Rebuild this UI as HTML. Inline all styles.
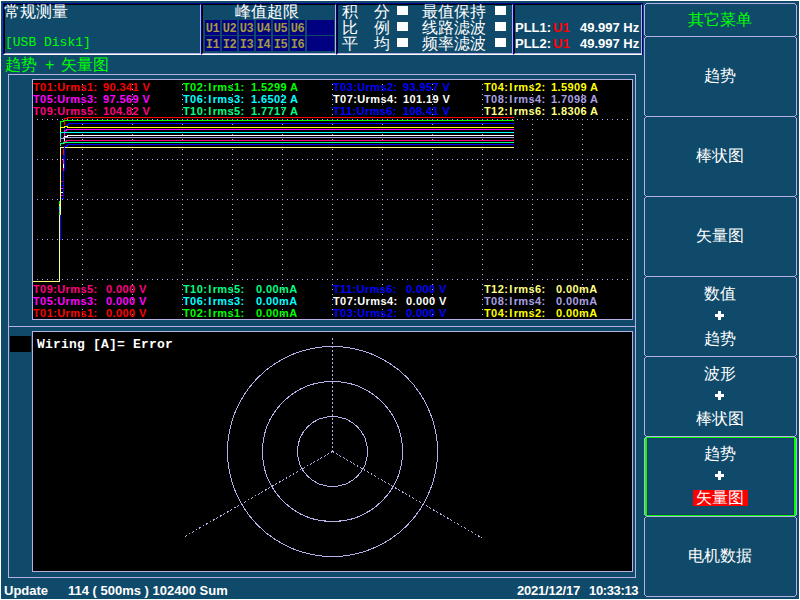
<!DOCTYPE html>
<html><head><meta charset="utf-8">
<style>
*{margin:0;padding:0;box-sizing:border-box}
html,body{width:800px;height:600px;overflow:hidden;background:#104a6a}
body{position:relative;font-family:"Liberation Sans",sans-serif;color:#fff}
.a{position:absolute}
.sunk{position:absolute;border-top:1px solid #000090;border-left:1px solid #000090;border-bottom:1px solid #fff;border-right:1px solid #fff}
.sunk>.in{position:absolute;left:0;top:0;right:0;bottom:0;border-top:1px solid #000;border-left:1px solid #000;border-bottom:1px solid #b8b0e0;border-right:1px solid #b8b0e0}
.cj{font-size:16px;line-height:16px;white-space:nowrap}
.cell{position:absolute;width:15px;height:15px;background:#000080;color:#a09a40;font:bold 12px/13px "Liberation Mono",monospace;text-align:center;letter-spacing:-0.5px;padding-top:3px;overflow:hidden}
.sq{position:absolute;width:11px;height:9px;background:#fff}
.t{position:absolute;font:bold 11px/12px "Liberation Sans",sans-serif;white-space:pre;letter-spacing:0.4px}
.btn{position:absolute;left:644px;width:153px;border:1px solid #b8b0e0;border-radius:2px}
.mt{position:absolute;left:644px;width:151px;text-align:center;font-size:16px;line-height:16px;white-space:nowrap}
</style></head><body>
<!-- screen border -->
<div class="a" style="left:0;top:0;width:800px;height:600px;border:1px solid #fff"></div>

<!-- status panels -->
<div class="sunk" style="left:3px;top:3px;width:199px;height:52px"><div class="in"></div></div>
<div class="sunk" style="left:201px;top:3px;width:136px;height:52px"><div class="in"></div></div>
<div class="sunk" style="left:336px;top:3px;width:178px;height:52px"><div class="in"></div></div>
<div class="sunk" style="left:513px;top:3px;width:130px;height:52px"><div class="in"></div></div>
<div class="a" style="left:642px;top:3px;width:1px;height:52px;background:#000090"></div>

<div class="a cj" style="left:4px;top:4px">常规测量</div>
<div class="a" style="left:5px;top:36px;color:#00ff00;font:13px/14px 'Liberation Mono',monospace">[USB Disk1]</div>

<div class="a cj" style="left:235px;top:4px">峰值超限</div>
<div class="cell" style="left:205px;top:20px">U1</div>
<div class="cell" style="left:222px;top:20px">U2</div>
<div class="cell" style="left:239px;top:20px">U3</div>
<div class="cell" style="left:256px;top:20px">U4</div>
<div class="cell" style="left:273px;top:20px">U5</div>
<div class="cell" style="left:290px;top:20px">U6</div>
<div class="cell" style="left:307px;top:20px;width:27px"></div>
<div class="cell" style="left:205px;top:36px">I1</div>
<div class="cell" style="left:222px;top:36px">I2</div>
<div class="cell" style="left:239px;top:36px">I3</div>
<div class="cell" style="left:256px;top:36px">I4</div>
<div class="cell" style="left:273px;top:36px">I5</div>
<div class="cell" style="left:290px;top:36px">I6</div>
<div class="cell" style="left:307px;top:36px;width:27px"></div>

<div class="a cj" style="left:342px;top:4px">积</div><div class="a cj" style="left:374px;top:4px">分</div>
<div class="a cj" style="left:342px;top:20px">比</div><div class="a cj" style="left:374px;top:20px">例</div>
<div class="a cj" style="left:342px;top:36px">平</div><div class="a cj" style="left:374px;top:36px">均</div>
<div class="sq" style="left:397px;top:6px"></div><div class="sq" style="left:397px;top:22px"></div><div class="sq" style="left:397px;top:38px"></div>
<div class="a cj" style="left:422px;top:4px">最值保持</div>
<div class="a cj" style="left:422px;top:20px">线路滤波</div>
<div class="a cj" style="left:422px;top:36px">频率滤波</div>
<div class="sq" style="left:495px;top:6px"></div><div class="sq" style="left:495px;top:22px"></div><div class="sq" style="left:495px;top:38px"></div>

<div class="a" style="left:515px;top:21px;font:bold 13px/14px 'Liberation Sans',sans-serif">PLL1:</div><div class="a" style="left:553px;top:21px;font:bold 13px/14px 'Liberation Sans',sans-serif;color:#ff0000">U1</div>
<div class="a" style="left:580px;top:21px;font:bold 13px/14px 'Liberation Sans',sans-serif">49.997 Hz</div>
<div class="a" style="left:515px;top:37px;font:bold 13px/14px 'Liberation Sans',sans-serif">PLL2:</div><div class="a" style="left:553px;top:37px;font:bold 13px/14px 'Liberation Sans',sans-serif;color:#ff0000">U1</div>
<div class="a" style="left:580px;top:37px;font:bold 13px/14px 'Liberation Sans',sans-serif">49.997 Hz</div>

<!-- mode label -->
<div class="a cj" style="left:5px;top:57px;color:#00ff00">趋势</div><div class="a cj" style="left:45px;top:57px;color:#00ff00">+</div><div class="a cj" style="left:61px;top:57px;color:#00ff00">矢量图</div>

<!-- frames -->
<div class="a" style="left:8px;top:74px;width:628px;height:504px;border:1px solid #b8b0e0"></div>
<div class="a" style="left:8px;top:326px;width:628px;height:1px;background:#b8b0e0"></div>
<div class="a" style="left:32px;top:79px;width:601px;height:241px;border:1px solid #b8b0e0;background:#000"></div>
<div class="a" style="left:32px;top:331px;width:601px;height:241px;border:1px solid #b8b0e0;background:#000"></div>
<div class="a" style="left:10px;top:336px;width:21px;height:16px;background:#000"></div>

<!-- trend chart -->
<svg class="a" style="left:0;top:0" width="800" height="600" shape-rendering="crispEdges">
  <g stroke="#b0b0e8" stroke-width="1" stroke-dasharray="1 4" fill="none">
    <path d="M37 119.5H632M37 159.5H632M37 199.5H632M37 239.5H632M37 279.5H632"/>
    <path d="M82.5 84V320M132.5 84V320M182.5 84V320M232.5 84V320M282.5 84V320M332.5 84V320M382.5 84V320M432.5 84V320M482.5 84V320M532.5 84V320M582.5 84V320"/>
  </g>
  <g fill="none" stroke-width="1">
    <path stroke="#ffff80" d="M33 281.5H59.5V215M60.5 215V147.5H514"/>
    <path stroke="#0000ff" d="M64.5 171V146.5H66.5V145.5H67.5V144.5H514"/>
    <path stroke="#0000ff" d="M63.5 171V198.5H61"/>
    <path stroke="#0000ff" d="M60.5 215V240"/>
    <path stroke="#ff0000" d="M64.5 125V118.5H67.5V117.5H514"/>
    <path stroke="#00ff00" d="M60.5 127V121.5H63.5V120.5H514"/>
    <path stroke="#0000ff" d="M64.5 130V126.5H66.5V125.5H67.5V124.5H68.5V123.5H514"/>
    <path stroke="#ffff00" d="M60.5 132V127.5H64.5V126.5H67.5V127.5H514"/>
    <path stroke="#ff00ff" d="M64.5 136V130.5H66.5V129.5H514"/>
    <path stroke="#00ffff" d="M60.5 138V132.5H514"/>
    <path stroke="#ffffff" d="M64.5 141V136.5H67.5V135.5H514"/>
    <path stroke="#a8a0e0" d="M60.5 142V138.5H63.5V137.5H514"/>
    <path stroke="#ff0080" d="M64.5 144V141.5H66.5V140.5H514"/>
    <path stroke="#00ff80" d="M60.5 146V143.5H63.5V142.5H514"/>
    <path stroke="#ff0000" d="M63.5 149V155M61 181.5H63"/>
    <path stroke="#0000ff" d="M63.5 155V159M61 185.5H63"/>
    <path stroke="#ff00ff" d="M63.5 159V164M61 188.5H63"/>
    <path stroke="#ffffff" d="M63.5 164V168M61 192.5H63"/>
    <path stroke="#ff0080" d="M63.5 168V171M61 195.5H63"/>
    <path stroke="#00ff00" d="M59.5 201V204M59.5 213V215"/>
    <path stroke="#ffff00" d="M59.5 204V206"/>
    <path stroke="#00ffff" d="M59.5 206V210"/>
    <path stroke="#a8a0e0" d="M59.5 210V213"/>
  </g>
</svg>

<!-- trend texts top -->
<div class="t" style="left:33px;top:81px;color:#ff0000">T01:Urms1:</div><div class="t" style="left:103px;top:81px;color:#ff0000">90.341 V</div>
<div class="t" style="left:33px;top:93px;color:#ff00ff">T05:Urms3:</div><div class="t" style="left:103px;top:93px;color:#ff00ff">97.569 V</div>
<div class="t" style="left:33px;top:105px;color:#ff0080">T09:Urms5:</div><div class="t" style="left:103px;top:105px;color:#ff0080">104.82 V</div>
<div class="t" style="left:183px;top:81px;color:#00ff00">T02:<span style="padding:0 1px">I</span>rms1:</div><div class="t" style="left:251px;top:81px;color:#00ff00">1.5299 A</div>
<div class="t" style="left:183px;top:93px;color:#00ffff">T06:<span style="padding:0 1px">I</span>rms3:</div><div class="t" style="left:251px;top:93px;color:#00ffff">1.6502 A</div>
<div class="t" style="left:183px;top:105px;color:#00ff80">T10:<span style="padding:0 1px">I</span>rms5:</div><div class="t" style="left:251px;top:105px;color:#00ff80">1.7717 A</div>
<div class="t" style="left:333px;top:81px;color:#0000ff">T03:Urms2:</div><div class="t" style="left:403px;top:81px;color:#0000ff">93.957 V</div>
<div class="t" style="left:333px;top:93px;color:#ffffff">T07:Urms4:</div><div class="t" style="left:403px;top:93px;color:#ffffff">101.19 V</div>
<div class="t" style="left:333px;top:105px;color:#0000ff">T11:Urms6:</div><div class="t" style="left:403px;top:105px;color:#0000ff">108.41 V</div>
<div class="t" style="left:484px;top:81px;color:#ffff00">T04:<span style="padding:0 1px">I</span>rms2:</div><div class="t" style="left:551px;top:81px;color:#ffff00">1.5909 A</div>
<div class="t" style="left:484px;top:93px;color:#a8a0e0">T08:<span style="padding:0 1px">I</span>rms4:</div><div class="t" style="left:551px;top:93px;color:#a8a0e0">1.7098 A</div>
<div class="t" style="left:484px;top:105px;color:#ffff80">T12:<span style="padding:0 1px">I</span>rms6:</div><div class="t" style="left:551px;top:105px;color:#ffff80">1.8306 A</div>

<!-- trend texts bottom -->
<div class="t" style="left:33px;top:283px;color:#ff0080">T09:Urms5:</div><div class="t" style="left:106px;top:283px;color:#ff0080">0.000 V</div>
<div class="t" style="left:33px;top:295px;color:#ff00ff">T05:Urms3:</div><div class="t" style="left:106px;top:295px;color:#ff00ff">0.000 V</div>
<div class="t" style="left:33px;top:307px;color:#ff0000">T01:Urms1:</div><div class="t" style="left:106px;top:307px;color:#ff0000">0.000 V</div>
<div class="t" style="left:183px;top:283px;color:#00ff80">T10:<span style="padding:0 1px">I</span>rms5:</div><div class="t" style="left:256px;top:283px;color:#00ff80">0.00mA</div>
<div class="t" style="left:183px;top:295px;color:#00ffff">T06:<span style="padding:0 1px">I</span>rms3:</div><div class="t" style="left:256px;top:295px;color:#00ffff">0.00mA</div>
<div class="t" style="left:183px;top:307px;color:#00ff00">T02:<span style="padding:0 1px">I</span>rms1:</div><div class="t" style="left:256px;top:307px;color:#00ff00">0.00mA</div>
<div class="t" style="left:333px;top:283px;color:#0000ff">T11:Urms6:</div><div class="t" style="left:406px;top:283px;color:#0000ff">0.000 V</div>
<div class="t" style="left:333px;top:295px;color:#ffffff">T07:Urms4:</div><div class="t" style="left:406px;top:295px;color:#ffffff">0.000 V</div>
<div class="t" style="left:333px;top:307px;color:#0000ff">T03:Urms2:</div><div class="t" style="left:406px;top:307px;color:#0000ff">0.000 V</div>
<div class="t" style="left:484px;top:283px;color:#ffff80">T12:<span style="padding:0 1px">I</span>rms6:</div><div class="t" style="left:556px;top:283px;color:#ffff80">0.00mA</div>
<div class="t" style="left:484px;top:295px;color:#a8a0e0">T08:<span style="padding:0 1px">I</span>rms4:</div><div class="t" style="left:556px;top:295px;color:#a8a0e0">0.00mA</div>
<div class="t" style="left:484px;top:307px;color:#ffff00">T04:<span style="padding:0 1px">I</span>rms2:</div><div class="t" style="left:556px;top:307px;color:#ffff00">0.00mA</div>

<!-- vector chart -->
<div class="a" style="left:37px;top:338px;font:bold 13px/14px 'Liberation Mono',monospace;color:#fff;letter-spacing:0.2px">Wiring [A]= Error</div>
<svg class="a" style="left:0;top:0" width="800" height="600" shape-rendering="crispEdges">
  <g fill="none" stroke="#b8b0e8" stroke-width="1">
    <circle cx="332.5" cy="451.5" r="105"/>
    <circle cx="332.5" cy="451.5" r="70"/>
    <circle cx="332.5" cy="451.5" r="35"/>
  </g>
  <g fill="none" stroke="#b8b0e8" stroke-width="1" stroke-dasharray="2 2">
    <path d="M332.5 338V451.5"/>
    <path d="M332.5 451.5L184 537"/>
    <path d="M332.5 451.5L482 538"/>
  </g>
</svg>

<!-- status bottom -->
<div class="a" style="left:4px;top:584px;font:bold 13px/14px 'Liberation Sans',sans-serif">Update</div>
<div class="a" style="left:68px;top:584px;font:bold 13px/14px 'Liberation Sans',sans-serif">114 ( 500ms ) 102400 Sum</div>
<div class="a" style="left:517px;top:584px;font:bold 13px/14px 'Liberation Sans',sans-serif;letter-spacing:-0.2px">2021/12/17</div><div class="a" style="left:589px;top:584px;font:bold 13px/14px 'Liberation Sans',sans-serif;letter-spacing:-0.35px">10:33:13</div>

<!-- menu -->
<div class="a" style="left:645px;top:437px;width:151px;height:79px;border:solid #00ff00;border-width:1px 2px"><div class="a" style="left:0;top:0;right:0;bottom:0;border:1px solid #1a3470"></div></div>
<svg class="a" style="left:0;top:0" width="800" height="600" shape-rendering="crispEdges"><g fill="#b8b0e0"><rect x="646" y="3" width="149" height="1"/><rect x="646" y="36" width="149" height="1"/><rect x="644" y="5" width="1" height="30"/><rect x="796" y="5" width="1" height="30"/><rect x="645" y="4" width="1" height="1"/><rect x="795" y="4" width="1" height="1"/><rect x="645" y="35" width="1" height="1"/><rect x="795" y="35" width="1" height="1"/><rect x="646" y="36" width="149" height="1"/><rect x="646" y="116" width="149" height="1"/><rect x="644" y="38" width="1" height="77"/><rect x="796" y="38" width="1" height="77"/><rect x="645" y="37" width="1" height="1"/><rect x="795" y="37" width="1" height="1"/><rect x="645" y="115" width="1" height="1"/><rect x="795" y="115" width="1" height="1"/><rect x="646" y="116" width="149" height="1"/><rect x="646" y="196" width="149" height="1"/><rect x="644" y="118" width="1" height="77"/><rect x="796" y="118" width="1" height="77"/><rect x="645" y="117" width="1" height="1"/><rect x="795" y="117" width="1" height="1"/><rect x="645" y="195" width="1" height="1"/><rect x="795" y="195" width="1" height="1"/><rect x="646" y="196" width="149" height="1"/><rect x="646" y="276" width="149" height="1"/><rect x="644" y="198" width="1" height="77"/><rect x="796" y="198" width="1" height="77"/><rect x="645" y="197" width="1" height="1"/><rect x="795" y="197" width="1" height="1"/><rect x="645" y="275" width="1" height="1"/><rect x="795" y="275" width="1" height="1"/><rect x="646" y="276" width="149" height="1"/><rect x="646" y="356" width="149" height="1"/><rect x="644" y="278" width="1" height="77"/><rect x="796" y="278" width="1" height="77"/><rect x="645" y="277" width="1" height="1"/><rect x="795" y="277" width="1" height="1"/><rect x="645" y="355" width="1" height="1"/><rect x="795" y="355" width="1" height="1"/><rect x="646" y="356" width="149" height="1"/><rect x="646" y="436" width="149" height="1"/><rect x="644" y="358" width="1" height="77"/><rect x="796" y="358" width="1" height="77"/><rect x="645" y="357" width="1" height="1"/><rect x="795" y="357" width="1" height="1"/><rect x="645" y="435" width="1" height="1"/><rect x="795" y="435" width="1" height="1"/><rect x="646" y="436" width="149" height="1"/><rect x="646" y="516" width="149" height="1"/><rect x="644" y="438" width="1" height="77"/><rect x="796" y="438" width="1" height="77"/><rect x="645" y="437" width="1" height="1"/><rect x="795" y="437" width="1" height="1"/><rect x="645" y="515" width="1" height="1"/><rect x="795" y="515" width="1" height="1"/><rect x="646" y="516" width="149" height="1"/><rect x="646" y="596" width="149" height="1"/><rect x="644" y="518" width="1" height="77"/><rect x="796" y="518" width="1" height="77"/><rect x="645" y="517" width="1" height="1"/><rect x="795" y="517" width="1" height="1"/><rect x="645" y="595" width="1" height="1"/><rect x="795" y="595" width="1" height="1"/></g></svg>
<div class="mt" style="top:12px;color:#00ff00">其它菜单</div>
<div class="mt" style="top:68px">趋势</div>
<div class="mt" style="top:148px">棒状图</div>
<div class="mt" style="top:228px">矢量图</div>
<div class="mt" style="top:548px">电机数据</div>
<div class="mt" style="top:286px">数值</div>
<div class="a" style="left:715px;top:314px;width:9px;height:3px;background:#fff"></div><div class="a" style="left:718px;top:311px;width:3px;height:9px;background:#fff"></div>
<div class="mt" style="top:331px">趋势</div>
<div class="mt" style="top:366px">波形</div>
<div class="a" style="left:715px;top:394px;width:9px;height:3px;background:#fff"></div><div class="a" style="left:718px;top:391px;width:3px;height:9px;background:#fff"></div>
<div class="mt" style="top:411px">棒状图</div>
<div class="mt" style="top:446px">趋势</div>
<div class="a" style="left:715px;top:474px;width:9px;height:3px;background:#fff"></div><div class="a" style="left:718px;top:471px;width:3px;height:9px;background:#fff"></div>
<div class="a" style="left:693px;top:490px;width:55px;height:16px;background:#ff0000"></div><div class="mt" style="top:490px">矢量图</div>
</body></html>
